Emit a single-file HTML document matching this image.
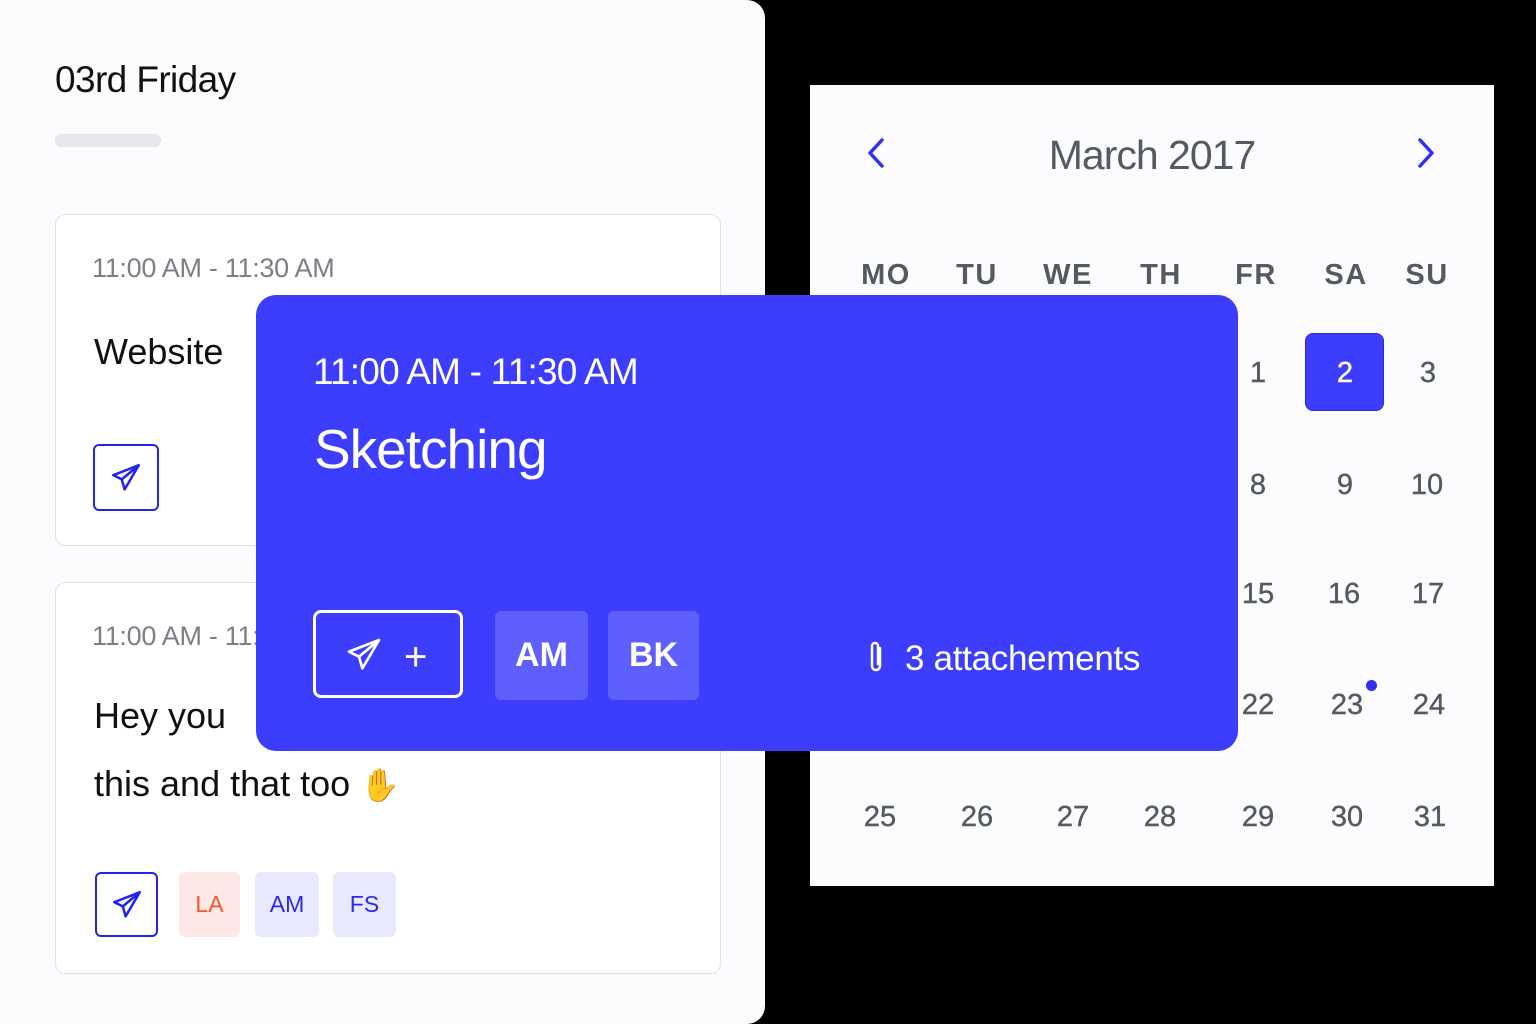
<!DOCTYPE html>
<html><head><meta charset="utf-8"><style>
*{margin:0;padding:0;box-sizing:border-box}
body{width:1536px;height:1024px;background:#000;position:relative;overflow:hidden;font-family:"Liberation Sans","Noto Sans CJK JP",sans-serif}
.abs{position:absolute}
.left{left:0;top:0;width:765px;height:1024px;background:#fcfcfe;border-radius:0 18px 18px 0}
.card{position:absolute;background:#fff;border:1px solid #dfe1ef;border-radius:10px}
.time{color:#7b7f86;font-size:27px;letter-spacing:-0.3px}
.title{color:#111;font-size:36px}
.ib{position:absolute;border:2px solid #2323ee;border-radius:6px;display:flex;align-items:center;justify-content:center}
.tag{position:absolute;border-radius:6px;display:flex;align-items:center;justify-content:center;font-size:23px}
.cal{left:810px;top:85px;width:684px;height:801px;background:#fcfcfe}
.dh,.dn{position:absolute;transform:translateX(-50%);color:#545b60;font-size:29px}
.dh{font-weight:bold;letter-spacing:1.5px;font-size:29px}
.dn{font-weight:500;-webkit-text-stroke:0.4px #545b60}
.blue{left:256px;top:295px;width:982px;height:456px;background:#3d3dfd;border-radius:20px}
</style></head><body>
<div class="abs left">
 <div class="abs" style="left:55px;top:59px;font-size:37px;color:#111;letter-spacing:-0.6px">03rd Friday</div>
 <div class="abs" style="left:55px;top:134px;width:106px;height:13px;border-radius:7px;background:#e6e7eb"></div>
 <div class="card" style="left:55px;top:214px;width:666px;height:332px">
  <div class="abs time" style="left:36px;top:38px">11:00 AM - 11:30 AM</div>
  <div class="abs title" style="left:38px;top:116px">Website</div>
  <div class="ib" style="left:37px;top:229px;width:66px;height:67px"><svg width="34" height="34" viewBox="0 0 24 24" fill="none" stroke="#2323ee" stroke-width="1.8" stroke-linejoin="round"><path d="M21 3 L3 10 L9 13 L11 20 L14 15 L21 3 Z M9 13 L21 3"/></svg></div>
 </div>
 <div class="card" style="left:55px;top:582px;width:666px;height:392px">
  <div class="abs time" style="left:36px;top:38px">11:00 AM - 11:30 AM</div>
  <div class="abs title" style="left:38px;top:112px">Hey you</div>
  <div class="abs title" style="left:38px;top:180px">this and that too <span style="font-size:32px">✋</span></div>
  <div class="ib" style="left:39px;top:289px;width:63px;height:65px"><svg width="34" height="34" viewBox="0 0 24 24" fill="none" stroke="#2323ee" stroke-width="1.8" stroke-linejoin="round"><path d="M21 3 L3 10 L9 13 L11 20 L14 15 L21 3 Z M9 13 L21 3"/></svg></div>
  <div class="tag" style="left:123px;top:289px;width:61px;height:65px;background:#fde8e8;color:#f4572a">LA</div>
  <div class="tag" style="left:199px;top:289px;width:64px;height:65px;background:#e8e9fc;color:#2a2ae6">AM</div>
  <div class="tag" style="left:277px;top:289px;width:63px;height:65px;background:#e8e9fc;color:#2a2ae6">FS</div>
 </div>
</div>
<div class="abs cal">
 <svg class="abs" style="left:56px;top:52px" width="20" height="32" viewBox="0 0 20 32"><path d="M16 3 L4 16 L16 29" fill="none" stroke="#3030f0" stroke-width="3.5" stroke-linecap="round" stroke-linejoin="round"/></svg>
 <svg class="abs" style="left:606px;top:52px" width="20" height="32" viewBox="0 0 20 32"><path d="M4 3 L16 16 L4 29" fill="none" stroke="#3030f0" stroke-width="3.5" stroke-linecap="round" stroke-linejoin="round"/></svg>
 <div class="abs" style="left:0;width:684px;text-align:center;top:47px;font-size:41px;color:#545b60;letter-spacing:-1px">March 2017</div>
 <div class="dh" style="left:76px;top:174px">MO</div><div class="dh" style="left:167px;top:174px">TU</div><div class="dh" style="left:258px;top:174px">WE</div><div class="dh" style="left:351px;top:174px">TH</div><div class="dh" style="left:446px;top:174px">FR</div><div class="dh" style="left:536px;top:174px">SA</div><div class="dh" style="left:617px;top:174px">SU</div>
 <div class="abs" style="left:495px;top:248px;width:79px;height:78px;background:#3d3dfd;border-radius:8px;border:1px solid #2a2ad0"></div>
 <div class="dn" style="left:448px;top:272px">1</div><div class="dn" style="left:535px;top:272px;color:#fff;-webkit-text-stroke:0.4px #fff">2</div><div class="dn" style="left:618px;top:272px">3</div>
 <div class="dn" style="left:448px;top:384px">8</div><div class="dn" style="left:535px;top:384px">9</div><div class="dn" style="left:617px;top:384px">10</div>
 <div class="dn" style="left:448px;top:493px">15</div><div class="dn" style="left:534px;top:493px">16</div><div class="dn" style="left:618px;top:493px">17</div>
 <div class="dn" style="left:448px;top:604px">22</div><div class="dn" style="left:537px;top:604px">23</div><div class="dn" style="left:619px;top:604px">24</div>
 <div class="abs" style="left:556px;top:595px;width:11px;height:11px;border-radius:50%;background:#3030f0"></div>
 <div class="dn" style="left:70px;top:716px">25</div><div class="dn" style="left:167px;top:716px">26</div><div class="dn" style="left:263px;top:716px">27</div><div class="dn" style="left:350px;top:716px">28</div><div class="dn" style="left:448px;top:716px">29</div><div class="dn" style="left:537px;top:716px">30</div><div class="dn" style="left:620px;top:716px">31</div>
</div>
<div class="abs blue">
 <div class="abs" style="left:57px;top:56px;color:#fff;font-size:37px;letter-spacing:-0.8px">11:00 AM - 11:30 AM</div>
 <div class="abs" style="left:58px;top:122px;color:#fff;font-size:55px;letter-spacing:-1px">Sketching</div>
 <div class="abs" style="left:57px;top:315px;width:150px;height:88px;border:3px solid #fff;border-radius:8px">
  <svg class="abs" style="left:28px;top:22px" width="40" height="40" viewBox="0 0 24 24" fill="none" stroke="#fff" stroke-width="1.6" stroke-linejoin="round"><path d="M21 3 L3 10 L9 13 L11 20 L14 15 L21 3 Z M9 13 L21 3"/></svg>
  <div class="abs" style="left:88px;top:22px;color:#fff;font-size:40px">+</div>
 </div>
 <div class="tag" style="left:239px;top:316px;width:93px;height:89px;background:#5f5ffd;color:#fff;font-size:34px;font-weight:bold">AM</div>
 <div class="tag" style="left:352px;top:316px;width:91px;height:89px;background:#5f5ffd;color:#fff;font-size:34px;font-weight:bold">BK</div>
 <svg class="abs" style="left:608px;top:345px" width="24" height="34" viewBox="0 0 24 34" fill="none" stroke="#fff" stroke-width="2.5" stroke-linecap="round"><path d="M16 8 V26 a4 4 0 0 1 -8 0 V6 a3 3 0 0 1 6 0 V24"/></svg>
 <div class="abs" style="left:649px;top:344px;color:#fff;font-size:35px;letter-spacing:-0.3px">3 attachements</div>
</div>
</body></html>
